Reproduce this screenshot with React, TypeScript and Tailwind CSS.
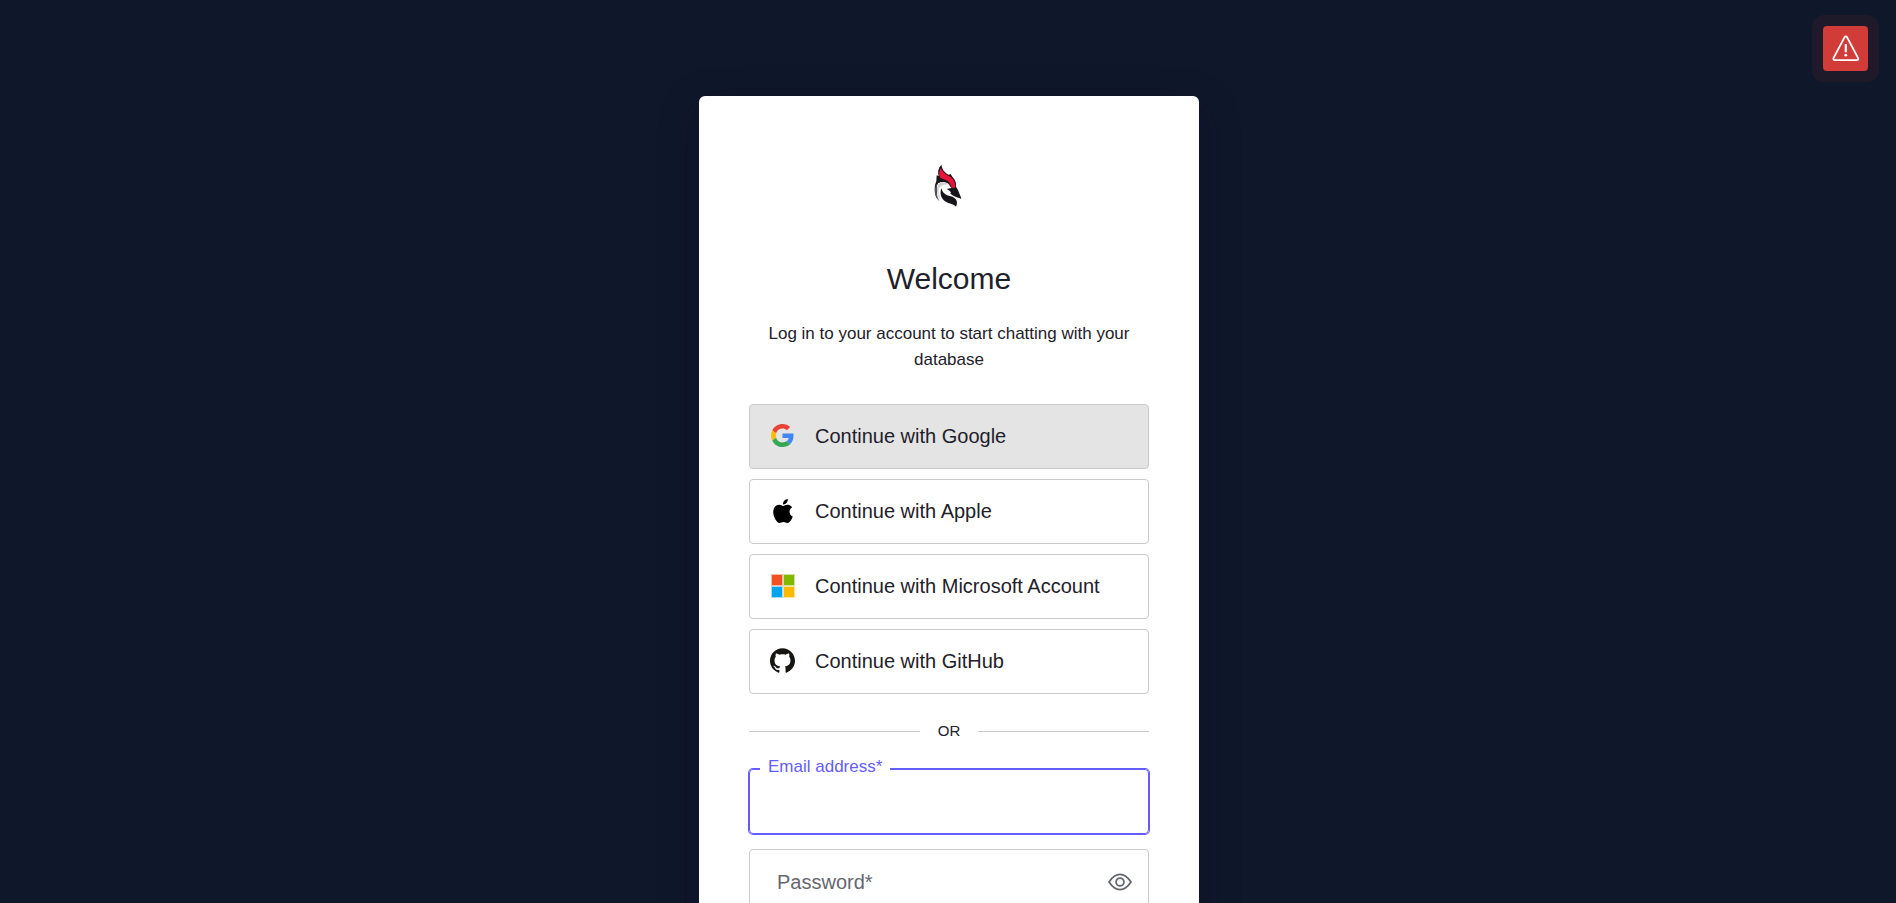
import React from "react";

function BirdLogo() {
  return (
    <svg viewBox="3 -1 168 180" className="h-[60px] w-14" role="img" aria-label="Woodpecker logo">
      <path d="M64 28 C55 38 52 50 56 62 L50 60 L49 78 C42 92 42 118 52 131 C49 115 50 98 60 90 C72 84 88 88 94 98 L108 118 L124 130 C119 116 114 102 108 94 C110 82 104 72 98 66 L91 55 L87 59 C77 53 67 46 64 28 Z" fill="#171519" />
      <path d="M63 37 C57 46 56 56 60 66 C66 72 76 72 83 77 C90 82 93 90 95 99 L106 97 C107 84 101 72 92 65 C82 58 68 54 63 37 Z" fill="#e8123a" />
      <path d="M55 82 C66 76 82 80 88 88 C90 93 92 97 96 99 L84 103 C90 109 98 112 96 118 C84 122 70 118 64 98 C60 112 64 126 76 134 C60 132 49 116 50 100 C50 92 52 86 55 82 Z" fill="#fff" />
      <path d="M54 88 C64 79 78 80 86 88 C76 86 64 88 57 98 C53 108 56 122 64 132 C52 124 47 104 54 88 Z" fill="#cfcfd2" />
      <path d="M51 64 C60 70 76 74 84 82 C74 79 62 80 52 84 Z" fill="#171519" />
      <path d="M80 101 L97 97 L108 98 C113 108 118 119 124 130 C112 127 99 123 90 114 C96 114 92 107 80 101 Z" fill="#171519" />
      <path d="M64 99 C59 113 62 129 75 138 C86 146 99 144 108 154 C113 145 112 132 102 127 C91 120 71 124 64 99 Z" fill="#171519" />
      <path d="M49 86 C40 108 46 128 59 138 C51 126 48 108 51 92" fill="#55545a" />
    </svg>
  );
}

function GoogleIcon() {
  return (
    <svg viewBox="0 0 48 48" className="size-[23px]" aria-hidden="true">
      <path fill="#EA4335" d="M24 9.5c3.54 0 6.71 1.22 9.21 3.6l6.85-6.85C35.9 2.38 30.47 0 24 0 14.62 0 6.51 5.38 2.56 13.22l7.98 6.19C12.43 13.72 17.74 9.5 24 9.5z" />
      <path fill="#4285F4" d="M46.98 24.55c0-1.57-.15-3.09-.38-4.55H24v9.02h12.94c-.58 2.96-2.26 5.48-4.78 7.18l7.73 6c4.51-4.18 7.09-10.36 7.09-17.65z" />
      <path fill="#FBBC05" d="M10.53 28.59c-.48-1.45-.76-2.99-.76-4.59s.27-3.14.76-4.59l-7.98-6.19C.92 16.46 0 20.12 0 24c0 3.88.92 7.54 2.56 10.78l7.97-6.19z" />
      <path fill="#34A853" d="M24 48c6.48 0 11.93-2.13 15.89-5.81l-7.73-6c-2.15 1.45-4.92 2.3-8.16 2.3-6.26 0-11.57-4.22-13.47-9.91l-7.98 6.19C6.51 42.62 14.62 48 24 48z" />
    </svg>
  );
}

function AppleIcon() {
  return (
    <svg viewBox="0 0 24 24" className="size-6" aria-hidden="true">
      <path d="M12.152 6.896c-.948 0-2.415-1.078-3.96-1.04-2.04.027-3.91 1.183-4.961 3.014-2.117 3.675-.546 9.103 1.519 12.09 1.013 1.454 2.208 3.09 3.792 3.039 1.52-.065 2.09-.987 3.935-.987 1.831 0 2.35.987 3.96.948 1.637-.026 2.676-1.48 3.676-2.948 1.156-1.688 1.636-3.325 1.662-3.415-.039-.013-3.182-1.221-3.22-4.857-.026-3.04 2.48-4.494 2.597-4.559-1.429-2.09-3.623-2.324-4.39-2.376-2-.156-3.675 1.09-4.61 1.09zM15.53 3.83c.843-1.012 1.4-2.427 1.245-3.83-1.207.052-2.662.805-3.532 1.818-.78.896-1.454 2.338-1.273 3.714 1.338.104 2.715-.688 3.559-1.701" />
    </svg>
  );
}

function MicrosoftIcon() {
  return (
    <svg viewBox="0 0 24 24" className="size-6" aria-hidden="true">
      <path fill="#f9b9a6" d="M0 0h12v12H0z" />
      <path fill="#cbe2a4" d="M12 0h12v12H12z" />
      <path fill="#a4dcf8" d="M0 12h12v12H0z" />
      <path fill="#ffe4a0" d="M12 12h12v12H12z" />
      <path fill="#f25022" d="M1 1h10v10H1z" />
      <path fill="#7fba00" d="M13 1h10v10H13z" />
      <path fill="#00a4ef" d="M1 13h10v10H1z" />
      <path fill="#ffb900" d="M13 13h10v10H13z" />
    </svg>
  );
}

function GitHubIcon() {
  return (
    <svg viewBox="0 0 24 24" className="size-[25px]" fill="#161514" aria-hidden="true">
      <path d="M12 .297c-6.63 0-12 5.373-12 12 0 5.303 3.438 9.8 8.205 11.385.6.113.82-.258.82-.577 0-.285-.01-1.04-.015-2.04-3.338.724-4.042-1.61-4.042-1.61C4.422 18.07 3.633 17.7 3.633 17.7c-1.087-.744.084-.729.084-.729 1.205.084 1.838 1.236 1.838 1.236 1.07 1.835 2.809 1.305 3.495.998.108-.776.417-1.305.76-1.605-2.665-.3-5.466-1.332-5.466-5.93 0-1.31.465-2.38 1.235-3.22-.135-.303-.54-1.523.105-3.176 0 0 1.005-.322 3.3 1.23.96-.267 1.98-.399 3-.405 1.02.006 2.04.138 3 .405 2.28-1.552 3.285-1.23 3.285-1.23.645 1.653.24 2.873.12 3.176.765.84 1.23 1.91 1.23 3.22 0 4.61-2.805 5.625-5.475 5.92.42.36.81 1.096.81 2.22 0 1.606-.015 2.896-.015 3.286 0 .315.21.69.825.57C20.565 22.092 24 17.592 24 12.297c0-6.627-5.373-12-12-12" />
    </svg>
  );
}

const providers = [
  { name: "Google", icon: <GoogleIcon />, surface: "bg-[#e4e4e4]" },
  { name: "Apple", icon: <AppleIcon />, surface: "bg-white" },
  { name: "Microsoft Account", icon: <MicrosoftIcon />, surface: "bg-white" },
  { name: "GitHub", icon: <GitHubIcon />, surface: "bg-white" },
];

export default function App() {
  return (
    <div className="relative h-screen overflow-hidden bg-slate-900 pt-24 pr-4 pl-[18px] font-['Liberation_Sans',Arial,sans-serif] text-[#1e212a]">
      <div className="absolute top-[15px] right-[17px] rounded-xl bg-[#1f1a29] p-[11px]">
        <button type="button" aria-label="Show warning" className="flex size-[45px] items-center justify-center rounded-[4px] bg-[#d13c38]">
          <svg viewBox="0 0 28 28" className="size-7" fill="none" stroke="#fff" strokeWidth="1.8" strokeLinecap="round" strokeLinejoin="round" aria-hidden="true">
            <path d="M12.6 2.200 C13.200 1.200 14.400 1.200 15 2.200 L26 22.800 C26.600 24 26.100 25.200 24.800 25.200 H2.800 C1.500 25.200 1 24 1.600 22.800 Z" />
            <path d="M13.800 9 V17.200" strokeWidth="2.200" strokeLinecap="butt" />
            <circle cx="13.800" cy="20.200" r="1.400" fill="#fff" stroke="none" />
          </svg>
        </button>
      </div>

      <main className="mx-auto flex w-full max-w-[500px] flex-col rounded-md bg-white px-[50px] pt-[59px] pb-[50px] shadow-[0_12px_40px_rgba(20,10,35,0.3)]">
        <header className="flex flex-col items-center text-center">
          <BirdLogo />
          <h1 className="mt-[46px] text-[30px] leading-9">Welcome</h1>
          <p className="mt-6 text-[17px] leading-[26px]">Log in to your account to start chatting with your database</p>
        </header>

        <div className="mt-[31px] flex flex-col gap-2.5">
          {providers.map((p) => (
            <button key={p.name} type="button" className={`flex h-[65px] items-center gap-5 rounded-[4px] border border-[#c9cace] px-5 pb-0.5 text-left text-xl ${p.surface}`}>
              <span className="flex w-[25px] justify-center">{p.icon}</span>
              <span>Continue with {p.name}</span>
            </button>
          ))}
        </div>

        <div className="mt-6 flex items-center gap-[18px] text-[15px] leading-[26px]">
          <span className="h-px grow bg-[#c9cace]" />
          <span>OR</span>
          <span className="h-px grow bg-[#c9cace]" />
        </div>

        <form className="mt-[25px] flex flex-col gap-[15px]">
          <div className="relative">
            <input id="email" type="email" className="block h-[65px] w-full rounded-[4px] border border-[#635dff] px-5 text-xl ring-1 ring-[#635dff] outline-none" />
            <label htmlFor="email" className="absolute -top-3 left-[11px] bg-white px-2 text-[17px] leading-5 text-[#635dff]">
              Email address*
            </label>
          </div>
          <div className="flex h-[65px] items-center rounded-[4px] border border-[#c9cace] pr-4 pl-[27px]">
            <input id="password" type="password" aria-label="Password" placeholder="Password*" className="min-w-0 grow text-xl outline-none placeholder:text-[#65676e]" />
            <button type="button" aria-label="Show password" className="shrink-0">
              <svg viewBox="0 0 24 18" className="h-[18px] w-6" fill="none" stroke="#65676e" strokeWidth="1.8" strokeLinejoin="round" aria-hidden="true">
                <path d="M1 9 C4.5 3.8 8 1.4 12 1.4 S19.500 3.800 23 9 C19.500 14.200 16 16.600 12 16.600 S4.500 14.200 1 9 Z" />
                <circle cx="12" cy="9" r="3.900" />
              </svg>
            </button>
          </div>
        </form>
      </main>
    </div>
  );
}
